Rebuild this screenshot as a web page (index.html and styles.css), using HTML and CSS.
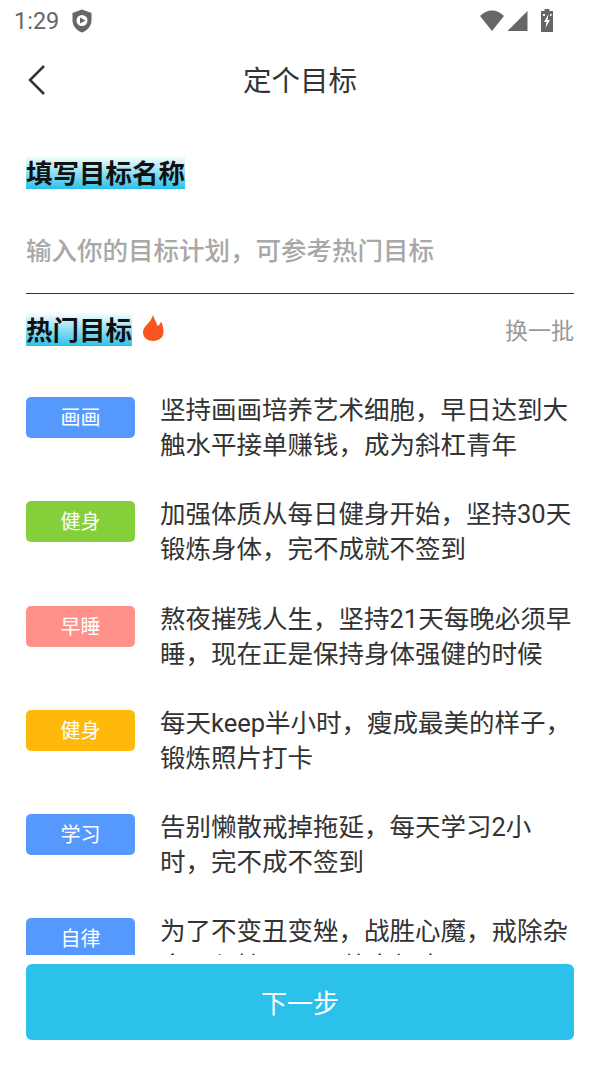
FILE: index.html
```html
<!DOCTYPE html>
<html>
<head>
    <title>定个目标</title>
    <link rel="stylesheet" href="styles.css">
</head>
<body>
    <div class="page">
        <div class="status-bar">
            <div class="status-left">
                <span class="time">1:29</span>
                <svg class="shield" width="20" height="24" viewBox="0 0 20 24">
                    <path d="M10 0.500 L19.500 4 V11 C19.500 17 15.500 21.500 10 23.500 C4.500 21.500 0.500 17 0.500 11 V4 Z" fill="#666"/>
                    <circle cx="10" cy="11.500" r="5.500" fill="#fff"/>
                    <path d="M8 8.500 L13.500 11.500 L8 14.500 Z" fill="#666"/>
                </svg>
            </div>
            <div class="status-right">
                <svg width="26" height="22" viewBox="0 0 24 22">
                    <path d="M0 6 C7 -1.500 17 -1.500 24 6 L12 21 Z" fill="#666"/>
                </svg>
                <svg width="21" height="22" viewBox="0 0 20 22">
                    <path d="M20 1 V21 H0 Z" fill="#666"/>
                </svg>
                <svg class="battery" width="14" height="24" viewBox="0 0 14 24">
                    <path d="M4.500 0 H9.500 V2 H13 V23 H1 V2 H4.500 Z" fill="#666"/>
                    <path d="M8.500 5 L4 13 H6.500 L5.500 19 L10 11 H7.500 Z" fill="#fff"/>
                    <rect x="3" y="5" width="2" height="2" fill="#fff"/>
                    <rect x="10" y="5" width="1.500" height="2" fill="#fff"/>
                </svg>
            </div>
        </div>

        <div class="nav">
            <svg class="back" width="20" height="32" viewBox="0 0 20 32">
                <path d="M17 2 L3 16 L17 30" fill="none" stroke="#333" stroke-width="2.500"/>
            </svg>
            <h1>定个目标</h1>
        </div>

        <div class="content">
            <h2 class="section-title name-title"><span class="mark">填写目标名称</span></h2>
            <div class="goal-input">输入你的目标计划，可参考热门目标</div>

            <div class="hot-head">
                <h2 class="section-title"><span class="mark">热门目标</span></h2>
                <svg class="fire" width="22" height="26" viewBox="0 0 22 26">
                    <path d="M11 0 C12 4 14.500 7 15.500 11 C17 10 18.500 9 19 6.500 C21 10 21.500 13.500 21.500 17 C21.500 22.500 17 26 11 26 C5 26 1 22.500 1 17 C1 11 9 8 11 0 Z" fill="#fa5420"/>
                </svg>
                <span class="refresh">换一批</span>
            </div>
        </div>

        <div class="goal-list">
            <div class="goal">
                <span class="tag tag-blue">画画</span>
                <p>坚持画画培养艺术细胞，早日达到大触水平接单赚钱，成为斜杠青年</p>
            </div>
            <div class="goal">
                <span class="tag tag-green">健身</span>
                <p>加强体质从每日健身开始，坚持30天锻炼身体，完不成就不签到</p>
            </div>
            <div class="goal">
                <span class="tag tag-red">早睡</span>
                <p>熬夜摧残人生，坚持21天每晚必须早睡，现在正是保持身体强健的时候</p>
            </div>
            <div class="goal">
                <span class="tag tag-yellow">健身</span>
                <p>每天keep半小时，瘦成最美的样子，锻炼照片打卡</p>
            </div>
            <div class="goal">
                <span class="tag tag-blue">学习</span>
                <p>告别懒散戒掉拖延，每天学习2小时，完不成不签到</p>
            </div>
            <div class="goal">
                <span class="tag tag-blue">自律</span>
                <p>为了不变丑变矬，战胜心魔，戒除杂念，坚持21天不熬夜打卡</p>
            </div>
        </div>

        <div class="footer">
            <button class="next">下一步</button>
        </div>
    </div>
</body>
</html>
```

FILE: styles.css
```css
* {
    box-sizing: border-box;
}

body {
    margin: 0;
    background: #fff;
    font-family: "Noto Sans CJK SC", "Noto Sans", sans-serif;
    color: #333;
}

.page {
    width: 600px;
    height: 1066px;
    display: flex;
    flex-direction: column;
    overflow: hidden;
}

.status-bar {
    height: 42px;
    padding: 0 46px 0 14px;
    display: flex;
    justify-content: space-between;
    align-items: center;
}

.status-left {
    display: flex;
    align-items: center;
    gap: 13px;
}

.time {
    font-family: Roboto, sans-serif;
    font-size: 23.500px;
    color: #666;
}

.status-right {
    display: flex;
    align-items: center;
    gap: 2px;
}

.battery {
    margin-left: 10px;
}

.nav {
    height: 76px;
    padding-bottom: 4px;
    display: flex;
    align-items: center;
    justify-content: center;
    position: relative;
}

.nav h1 {
    margin: 0;
    font-size: 28.5px;
    font-weight: 400;
}

.back {
    position: absolute;
    left: 27px;
    top: 22px;
}

.content {
    padding: 0 26px;
}

.section-title {
    margin: 0;
    font-size: 26.5px;
    line-height: 34px;
    font-weight: 700;
    color: #111;
}

.name-title {
    margin-top: 37px;
}

.mark {
    display: inline-block;
    height: 34px;
    background: linear-gradient(to bottom, #fff, #2bc1ea);
}

.goal-input {
    height: 104.500px;
    padding-top: 15px;
    display: flex;
    align-items: center;
    font-size: 25.5px;
    font-weight: 500;
    color: #a8a8a8;
    border-bottom: 1.500px solid #333;
}

.hot-head {
    margin-top: 18.500px;
    display: flex;
    align-items: center;
}

.fire {
    margin-left: 10px;
    margin-bottom: 2px;
}

.refresh {
    margin-left: auto;
    font-size: 23px;
    color: #999;
}

.goal-list {
    height: 609px;
    padding: 51px 26px 0;
    overflow: hidden;
}

.goal {
    display: flex;
    align-items: flex-start;
    gap: 25px;
    height: 104.300px;
}

.tag {
    flex: none;
    width: 109px;
    height: 41px;
    padding-bottom: 2px;
    border-radius: 5px;
    display: flex;
    align-items: center;
    justify-content: center;
    color: #fff;
    font-size: 20px;
}

.tag-blue {
    background: #5599ff;
}

.tag-green {
    background: #85cf3b;
}

.tag-red {
    background: #ff918a;
}

.tag-yellow {
    background: #ffb90a;
}

.goal p {
    margin: -4px 0 0;
    width: 420px;
    flex: none;
    font-family: Roboto, "Noto Sans CJK SC", sans-serif;
    font-size: 25.5px;
    line-height: 35px;
    color: #333;
}

.footer {
    padding: 9px 26px 0;
}

.next {
    width: 100%;
    height: 76px;
    padding-bottom: 3px;
    border: none;
    border-radius: 6px;
    background: #2bc1ea;
    color: #fff;
    font-family: inherit;
    font-size: 26px;
}
```
